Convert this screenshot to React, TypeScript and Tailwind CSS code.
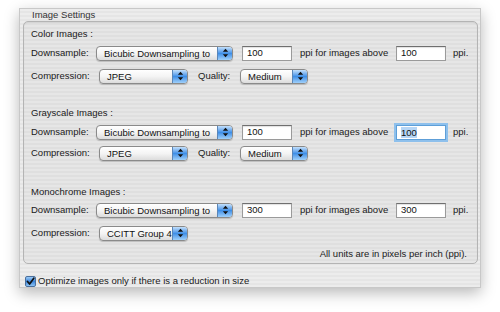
import React from 'react';

const font = { fontFamily: '"Lucida Grande", "Liberation Sans", Arial, sans-serif' };

// Aqua style popup menu
function PopUp({ value, className }: { value: string; className: string }) {
  return (
    <div
      className={`flex h-[15px] items-stretch rounded-[4px] border border-[#8a8a8a] bg-gradient-to-b from-white via-[#f4f4f4] to-[#dcdcdc] shadow-[0_1px_1px_rgba(0,0,0,0.18)] ${className}`}
    >
      <span className="flex-1 overflow-hidden whitespace-nowrap pl-[7px] text-[9.5px] leading-[13px] text-[#111]">{value}</span>
      <span className="flex w-[15px] items-center justify-center rounded-r-[3px] border-l border-[#5a86b8] bg-gradient-to-b from-[#c3e0fb] via-[#3f8fe6] to-[#9fd0fa]">
        <svg width="7" height="10" viewBox="0 0 7 10">
          <path d="M3.5 0.8 L6.2 3.8 L0.8 3.8 Z" fill="#111" />
          <path d="M3.5 9.2 L6.2 6.2 L0.8 6.2 Z" fill="#111" />
        </svg>
      </span>
    </div>
  );
}

function Field({ value, focused }: { value: string; focused?: boolean }) {
  return (
    <div
      className={`flex h-[15px] items-center border bg-white pl-[4px] text-[9.5px] text-[#111] ${
        focused
          ? 'border-[#5e9fd8] shadow-[0_0_0_2px_#8ec0ec]'
          : 'border-[#9a9a9a] border-t-[#6f6f6f] shadow-[inset_0_1px_1px_rgba(0,0,0,0.12)]'
      } w-[50px]`}
    >
      {focused ? <span className="bg-[#b5d5f5] leading-[11px]">{value}</span> : value}
    </div>
  );
}

function DownsampleRow({ res, above, focused, className }: { res: string; above: string; focused?: boolean; className: string }) {
  return (
    <div className={`flex h-[20px] items-center ${className}`}>
      <span className="w-[65px]">Downsample:</span>
      <PopUp value="Bicubic Downsampling to" className="w-[137px]" />
      <div className="ml-[9px]">
        <Field value={res} />
      </div>
      <span className="ml-[8px] w-[96px]">ppi for images above</span>
      <Field value={above} focused={focused} />
      <span className="ml-[7px]">ppi.</span>
    </div>
  );
}

function CompressionRow({ value, quality, className }: { value: string; quality?: boolean; className: string }) {
  return (
    <div className={`flex h-[20px] items-center ${className}`}>
      <span className="w-[68px]">Compression:</span>
      <PopUp value={value} className="w-[89px]" />
      {quality && (
        <>
          <span className="ml-[10px] w-[42px]">Quality:</span>
          <PopUp value="Medium" className="w-[68px]" />
        </>
      )}
    </div>
  );
}

export default function App() {
  return (
    <div className="h-[312px] w-[500px] bg-white pl-[19px] pt-[8px]" style={font}>
      <div className="h-[280px] w-[462px] border border-[#c8c8c8] bg-[repeating-linear-gradient(0deg,#ececec_0px,#ececec_2px,#e5e5e5_2px,#e5e5e5_4px)] shadow-[0_5px_14px_rgba(0,0,0,0.28)]">
        {/* Title */}
        <div className="h-[12px] pl-[12px] text-[9.5px] leading-[12px] text-[#333]">Image Settings</div>

        {/* Group box */}
        <div className="ml-[3px] mr-[2px] mt-[0px] rounded-[5px] border border-[#b4b4b4] bg-[repeating-linear-gradient(0deg,#e6e6e6_0px,#e6e6e6_2px,#dfdfdf_2px,#dfdfdf_4px)] px-[7px] pb-[2px] pt-[5px] text-[9.5px] text-[#1a1a1a] shadow-[inset_0_1px_1px_rgba(0,0,0,0.08)]">
          <div className="h-[14px] leading-[14px]">Color Images :</div>
          <DownsampleRow res="100" above="100" className="mt-[2px]" />
          <CompressionRow value="JPEG" quality className="mt-[3px]" />

          <div className="mt-[20px] h-[14px] leading-[14px]">Grayscale Images :</div>
          <DownsampleRow res="100" above="100" focused className="mt-[2px]" />
          <CompressionRow value="JPEG" quality className="mt-[1px]" />

          <div className="mt-[22px] h-[14px] leading-[14px]">Monochrome Images :</div>
          <DownsampleRow res="300" above="300" className="mt-[1px]" />
          <CompressionRow value="CCITT Group 4" className="mt-[3px]" />

          <div className="mt-[4px] h-[14px] pr-[3px] text-right leading-[14px]">All units are in pixels per inch (ppi).</div>
        </div>

        {/* Checkbox */}
        <div className="ml-[5px] mt-[10px] flex h-[14px] items-center text-[9.5px] text-[#1a1a1a]">
          <span className="mr-[2px] flex h-[11px] w-[11px] items-center justify-center rounded-[2px] border border-[#4a6f9c] bg-gradient-to-b from-[#9ccbf7] via-[#3b86dc] to-[#8cc2f2]">
            <svg width="9" height="9" viewBox="0 0 9 9">
              <path d="M1.5 4.5 L3.6 7 L7.8 1.2" stroke="#111" strokeWidth="1.7" fill="none" strokeLinecap="round" strokeLinejoin="round" />
            </svg>
          </span>
          Optimize images only if there is a reduction in size
        </div>
      </div>
    </div>
  );
}
